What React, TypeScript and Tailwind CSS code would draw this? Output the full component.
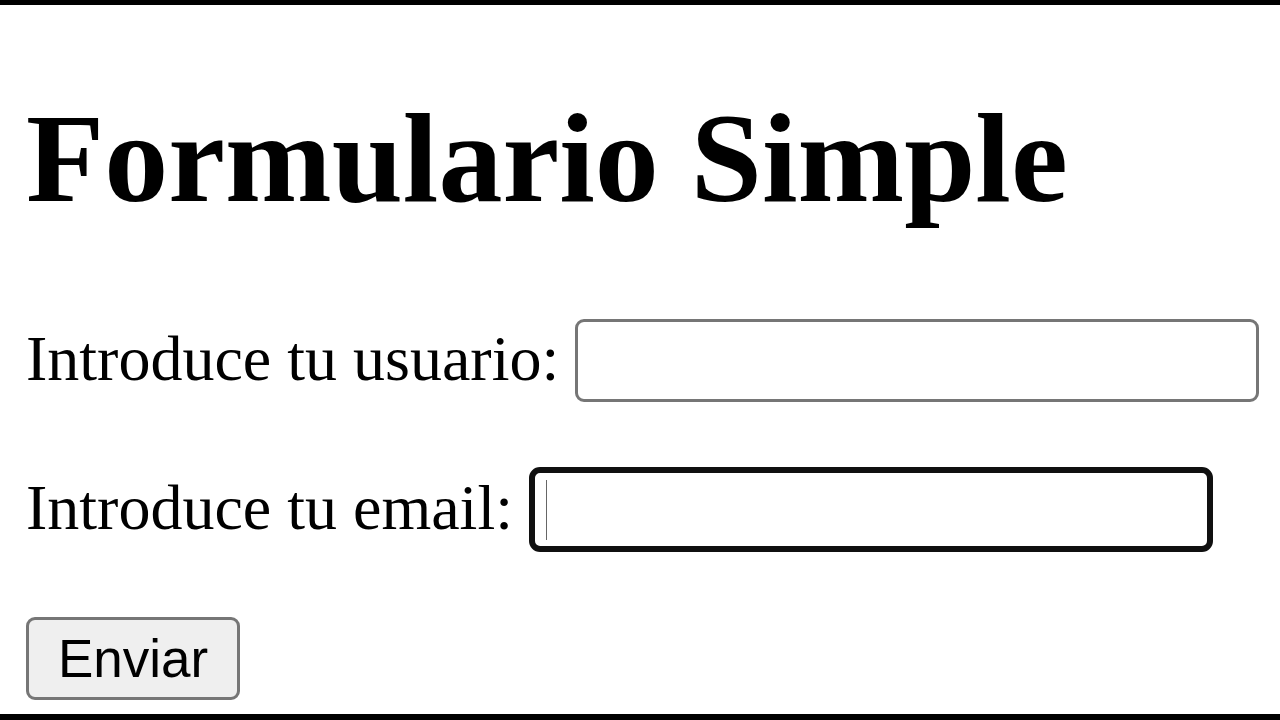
export default function App() {
  return (
    <div className="flex h-[720px] flex-col bg-white text-black">
      <div className="h-[5px] bg-black" />

      <main className="flex-1 pl-[26px]" style={{ fontFamily: '"Liberation Serif", "Times New Roman", serif' }}>
        <h1 className="mt-[89px] text-[128px] font-bold leading-[128px]">Formulario Simple</h1>

        <form className="mt-[97px] flex flex-col" onSubmit={(e) => e.preventDefault()}>
          <div className="flex h-[83px] items-center gap-[16px]">
            <label htmlFor="usuario" className="mb-[4px] text-[64px] leading-[64px]">
              Introduce tu usuario:
            </label>
            <input
              id="usuario"
              type="text"
              className="h-[83px] w-[684px] rounded-[9px] border-[3px] border-[#767676] bg-white outline-none"
            />
          </div>

          <div className="mt-[65px] flex h-[85px] items-center gap-[16px]">
            <label htmlFor="email" className="mb-[4px] text-[64px] leading-[64px]">
              Introduce tu email:
            </label>
            <div className="relative">
              <input
                id="email"
                type="email"
                className="block h-[85px] w-[684px] rounded-[11px] border-[6px] border-[#101010] bg-white caret-transparent outline-none"
              />
              {/* fake caret, the screenshot caught it mid-blink */}
              <span className="absolute left-[17px] top-[13px] h-[60px] w-[1px] bg-[#666]" />
            </div>
          </div>

          <div className="mt-[65px]">
            <button
              type="submit"
              className="flex h-[83px] w-[214px] items-center justify-center rounded-[9px] border-[3px] border-[#767676] bg-[#efefef] text-[53px] leading-none"
              style={{ fontFamily: '"Liberation Sans", Arial, sans-serif' }}
            >
              Enviar
            </button>
          </div>
        </form>
      </main>

      <div className="h-[6px] bg-black" />
    </div>
  );
}
